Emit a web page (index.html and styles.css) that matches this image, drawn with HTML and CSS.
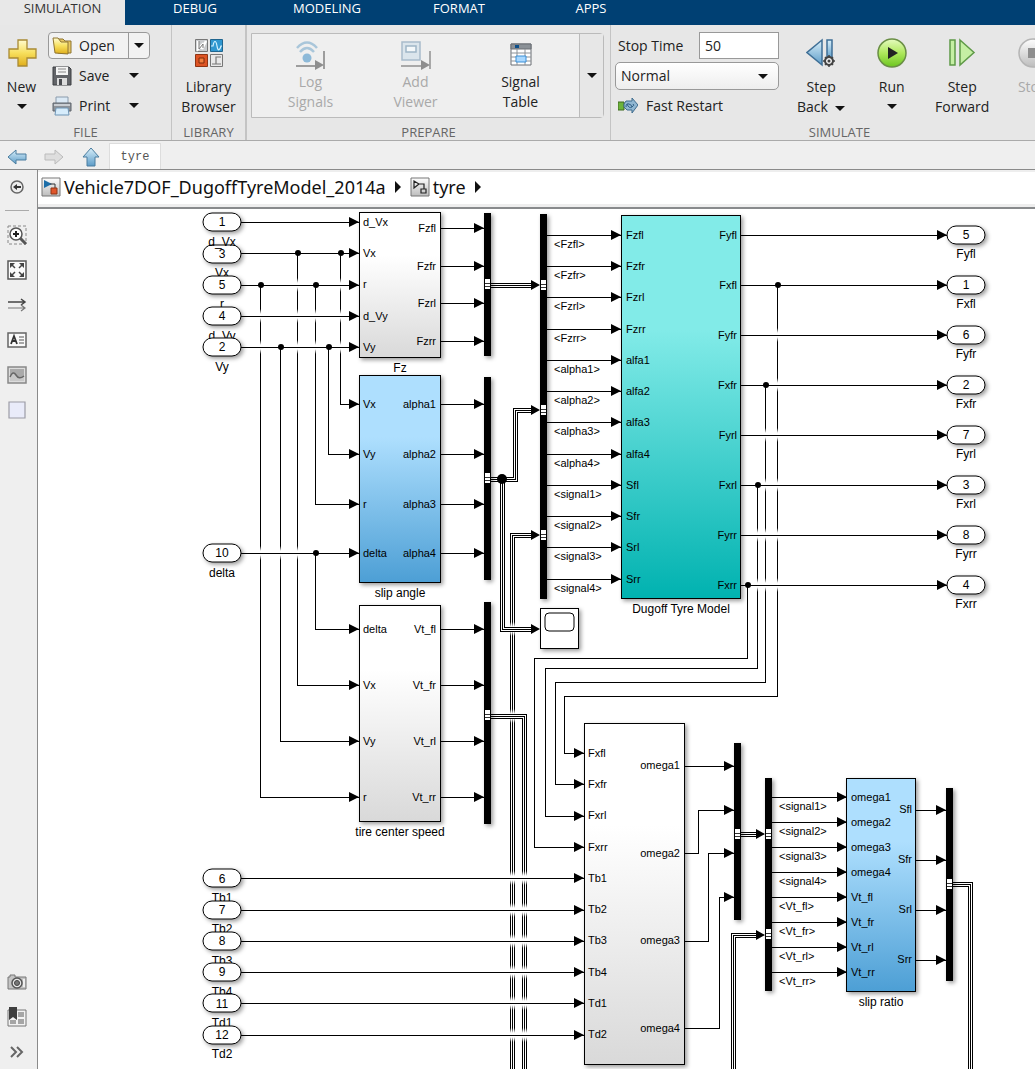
FILE: index.html
```html
<!DOCTYPE html>
<html lang="en">
<head>
	<meta charset="utf-8">
	<title>Vehicle7DOF_DugoffTyreModel_2014a/tyre - Simulink</title>
	<meta name="viewport" content="width=device-width, initial-scale=1.0">
	<link rel="stylesheet" href="styles.css">
</head>
<body>
	<!-- shared gradients -->
	<svg class="defs" width="0" height="0" aria-hidden="true">
		<defs>
			<linearGradient id="gold" x1="0" y1="0" x2="0" y2="1"><stop offset="0" stop-color="#fffbd0"/><stop offset=".5" stop-color="#f7df5c"/><stop offset="1" stop-color="#e0ae1c"/></linearGradient>
			<linearGradient id="steel" x1="0" y1="0" x2="0" y2="1"><stop offset="0" stop-color="#d9effa"/><stop offset="1" stop-color="#5c9cc8"/></linearGradient>
			<linearGradient id="lime" x1="0" y1="0" x2="0" y2="1"><stop offset="0" stop-color="#e6fbc0"/><stop offset=".5" stop-color="#aee85c"/><stop offset="1" stop-color="#6cc520"/></linearGradient>
			<linearGradient id="silver" x1="0" y1="0" x2="0" y2="1"><stop offset="0" stop-color="#fdfdfd"/><stop offset="1" stop-color="#bdbdbd"/></linearGradient>
		</defs>
	</svg>

	<nav class="tabs">
		<a class="tab active" href="#">SIMULATION</a>
		<a class="tab" href="#">DEBUG</a>
		<a class="tab" href="#">MODELING</a>
		<a class="tab" href="#">FORMAT</a>
		<a class="tab" href="#">APPS</a>
	</nav>

	<div class="ribbon">
		<section class="section file">
			<div class="section-body">
				<button class="tool new">
					<svg width="30" height="30" viewBox="0 0 30 30"><path d="M11 2h9v9h9v9h-9v8h-9v-8H2v-9h9z" fill="url(#gold)" stroke="#a98a35" stroke-width="1.3"/></svg>
					<span>New</span>
					<i class="caret"></i>
				</button>
				<div class="file-list">
					<div class="row split">
						<button class="row-main">
							<svg width="20" height="20" viewBox="0 0 20 20"><path d="M6 3h5l2 2h6v12H6z" fill="#e9c964" stroke="#8e7431"/><path d="M1 2h5l3 4h7v12l-13-1z" fill="url(#gold)" stroke="#8e7431"/></svg>
							<span>Open</span>
						</button>
						<button class="row-more" aria-label="Open options"><i class="caret"></i></button>
					</div>
					<div class="row">
						<button class="row-main">
							<svg width="20" height="20" viewBox="0 0 20 20"><path d="M1 1h16l2 2v16H1z" fill="#626468" stroke="#3c3e42"/><path d="M4 1h12v8H4z" fill="#f4f4f4"/><path d="M6 3h8M6 6h8" stroke="#888"/><path d="M5 12h10v7H5z" fill="#ddd"/><path d="M7 13h3v6H7z" fill="#4a4c50"/></svg>
							<span>Save</span>
						</button>
						<button class="row-more" aria-label="Save options"><i class="caret"></i></button>
					</div>
					<div class="row">
						<button class="row-main">
							<svg width="20" height="20" viewBox="0 0 20 20"><path d="M4 1h12v7H4z" fill="#dbe9f5" stroke="#8a9bac"/><path d="M1 7h18v8H1z" fill="#8d9298" stroke="#5f656c"/><path d="M2 8h16v2H2z" fill="#c9cdd2"/><path d="M4 12h12l1 7H3z" fill="#d6ecfb" stroke="#6f95b5"/></svg>
							<span>Print</span>
						</button>
						<button class="row-more" aria-label="Print options"><i class="caret"></i></button>
					</div>
				</div>
			</div>
			<h2>FILE</h2>
		</section>

		<section class="section library">
			<div class="section-body">
				<button class="tool">
					<svg width="30" height="30" viewBox="0 0 30 30">
						<path d="M1.500 1.500h12v12h-12z" fill="#c9cbce" stroke="#777"/><path d="M4 3v8l4-4v4l4-8" fill="none" stroke="#fff" stroke-width="2.500"/><path d="M5 3v8l4-5v4" fill="none" stroke="#777"/>
						<path d="M16.500 1.500h12v12h-12z" fill="#2f97d0" stroke="#20658f"/><path d="M17 8h2c1-6 3-6 4 0s3 4 4 0h1" fill="none" stroke="#d5f2ff" stroke-width="1.200"/>
						<path d="M1.500 16.500h12v12h-12z" fill="#dd5424" stroke="#8f3414"/><path d="M5 20h5v5H5z" fill="#f3803f" stroke="#7e2a0c"/>
						<path d="M16.500 16.500h12v12h-12z" fill="#e9e9e9" stroke="#777"/><path d="M18 26h4v-7h5M22 26h5" fill="none" stroke="#777" stroke-width="1.200"/>
					</svg>
					<span>Library<br>Browser</span>
				</button>
			</div>
			<h2>LIBRARY</h2>
		</section>

		<section class="section prepare">
			<div class="section-body">
				<div class="gallery">
					<div class="gallery-items">
						<button class="tool" disabled>
							<svg width="30" height="30" viewBox="0 0 30 30"><path d="M1 7q10-11 20 0M4 11q7-8 14 0" fill="none" stroke="#a9c6da" stroke-width="2.500"/><circle cx="11" cy="17" r="4.500" fill="#8db9d8"/><path d="M0 25h20M28 10v18" stroke="#9d9d9d" stroke-width="2"/><path d="M19 19l9 5-9 5z" fill="#8e8e8e"/></svg>
							<span>Log<br>Signals</span>
						</button>
						<button class="tool" disabled>
							<svg width="30" height="30" viewBox="0 0 30 30"><path d="M1 1h18v18H1z" fill="#dbe5ec" stroke="#a9bccb" stroke-width="1.500"/><path d="M5 5h10v6H5z" fill="#f4f8fa" stroke="#9fb5c6" stroke-width="1.500"/><path d="M0 25h21M29 10v18" stroke="#a8a8a8" stroke-width="2"/><path d="M20 19l9 5-9 5z" fill="#8e8e8e"/></svg>
							<span>Add<br>Viewer</span>
						</button>
						<button class="tool">
							<svg width="30" height="30" viewBox="0 0 30 30"><path d="M5 3h20v21H5z" fill="#fff" stroke="#6a6f75"/><path d="M5 3h20v5H5z" fill="#8b9197" stroke="#6a6f75"/><path d="M9 4h4v3H9z" fill="#0d4f8a"/><path d="M5 12h20M5 16h20M5 20h20M11 8v16M19 8v16" stroke="#8c9298"/><path d="M10 15h10v6H10z" fill="#a9d8ff" stroke="#3a8fd6"/></svg>
							<span>Signal<br>Table</span>
						</button>
					</div>
					<button class="gallery-more" aria-label="More"><i class="caret"></i></button>
				</div>
			</div>
			<h2>PREPARE</h2>
		</section>

		<section class="section simulate">
			<div class="section-body">
				<div class="settings">
					<div class="stop-time">
						<label for="stop">Stop Time</label>
						<input id="stop" type="text" value="50">
					</div>
					<div class="mode">
						<select aria-label="Simulation mode"><option>Normal</option><option>Accelerator</option></select>
						<i class="caret"></i>
					</div>
					<button class="fast">
						<svg width="20" height="16" viewBox="0 0 20 16"><path d="M0 4h6v8H0z" fill="#6cb33a" stroke="#3e6b21"/><path d="M8 3h6V0l6 7-6 8v-3H9L6 9V6z" fill="#8fb6d2" stroke="#3f6c8e"/><path d="M8 9q0-4 3-3t3 3M9 6q2 5 5 3t1-3" fill="none" stroke="#2f5f85"/></svg>
						<span>Fast Restart</span>
					</button>
				</div>
				<button class="tool">
					<svg width="30" height="30" viewBox="0 0 30 30"><path d="M16 2v25L1 14.500z" fill="url(#steel)" stroke="#3f6f96" stroke-width="1.500"/><path d="M21 2h5v19h-5z" fill="url(#steel)" stroke="#3f6f96" stroke-width="1.500"/><circle cx="23" cy="23" r="4" fill="#eee" stroke="#444" stroke-width="2"/><path d="M23 17v3M23 26v3M17 23h3M26 23h3M19 19l2 2M25 25l2 2M27 19l-2 2M21 25l-2 2" stroke="#444" stroke-width="1.500"/><circle cx="23" cy="23" r="1.500" fill="#444"/></svg>
					<span>Step<br>Back <i class="caret"></i></span>
				</button>
				<button class="tool">
					<svg width="30" height="30" viewBox="0 0 30 30"><circle cx="15" cy="15" r="14" fill="url(#lime)" stroke="#6a8f45" stroke-width="1.500"/><path d="M11 9l10 6-10 6z" fill="#222"/></svg>
					<span>Run</span>
					<i class="caret"></i>
				</button>
				<button class="tool">
					<svg width="30" height="30" viewBox="0 0 30 30"><path d="M3 2h5v25H3zM13 2l14 12.500L13 27z" fill="#c5efa4" stroke="#5f9a48" stroke-width="1.500"/></svg>
					<span>Step<br>Forward</span>
				</button>
				<button class="tool" disabled>
					<svg width="30" height="30" viewBox="0 0 30 30"><circle cx="15" cy="15" r="14" fill="url(#silver)" stroke="#b5b5b5" stroke-width="1.500"/><path d="M10 10h10v10H10z" fill="#8e8e8e"/></svg>
					<span>Stop</span>
				</button>
			</div>
			<h2>SIMULATE</h2>
		</section>
	</div>

	<div class="docbar">
		<button class="nav" aria-label="Back"><svg width="20" height="20" viewBox="0 0 20 20"><path d="M1 10l8-7v4h10v6H9v4z" fill="url(#steel)" stroke="#4a7d9f"/></svg></button>
		<button class="nav" aria-label="Forward" disabled><svg width="20" height="20" viewBox="0 0 20 20"><path d="M19 10l-8-7v4H1v6h10v4z" fill="#dedede" stroke="#bbb"/></svg></button>
		<button class="nav" aria-label="Up"><svg width="20" height="20" viewBox="0 0 20 20"><path d="M10 1l8 9h-4v9H6v-9H2z" fill="url(#steel)" stroke="#4a7d9f"/></svg></button>
		<a class="doc" href="#">tyre</a>
	</div>

	<div class="workspace">
		<aside class="palette">
			<div class="palette-group">
				<button aria-label="Hide browser"><svg width="20" height="20" viewBox="0 0 20 20"><circle cx="10" cy="10" r="6" fill="#eee" stroke="#666" stroke-width="1.500"/><path d="M6 10l4-3v2h4v2h-4v2z" fill="#333"/></svg></button>
				<hr>
				<button aria-label="Zoom"><svg width="20" height="20" viewBox="0 0 20 20"><path d="M1 1h18v18H1z" fill="none" stroke="#888" stroke-dasharray="3 2"/><path d="M13 13l6 6" stroke="#555" stroke-width="3"/><circle cx="9" cy="9" r="6" fill="#fff" stroke="#555" stroke-width="1.500"/><path d="M6 9h6M9 6v6" stroke="#222" stroke-width="2"/></svg></button>
				<button aria-label="Fit to view"><svg width="20" height="20" viewBox="0 0 20 20"><path d="M1 1h18v18H1z" fill="#fbfbfb" stroke="#5a5a5a" stroke-width="1.500"/><path d="M3 3h5L3 8zM17 3h-5l5 5zM3 17h5l-5-5zM17 17h-5l5-5z" fill="#444"/><path d="M4 4l4 4M16 4l-4 4M4 16l4-4M16 16l-4-4" stroke="#444" stroke-width="1.500"/></svg></button>
				<button aria-label="Sample times"><svg width="20" height="20" viewBox="0 0 20 20"><path d="M1 7h17M14 4l4 3-4 3" fill="none" stroke="#444" stroke-width="1.500"/><path d="M1 13h17M14 10l4 3-4 3" fill="none" stroke="#777" stroke-width="1.200"/></svg></button>
				<button aria-label="Annotation"><svg width="20" height="20" viewBox="0 0 20 20"><path d="M1 3h18v14H1z" fill="#fafafa" stroke="#666" stroke-width="1.500"/><path d="M4 14l3-8 3 8M5 11h4" fill="none" stroke="#333" stroke-width="1.800"/><path d="M12 7h5M12 10h5M12 13h5" stroke="#555"/></svg></button>
				<button aria-label="Image"><svg width="20" height="20" viewBox="0 0 20 20"><path d="M1 2h18v16H1z" fill="#dcdcdc" stroke="#888" stroke-width="1.500"/><path d="M3 4h14v12H3z" fill="#aaa"/><path d="M3 12q3-7 6-2t8 1v5H3z" fill="#c8c8c8"/><path d="M3 12q3-7 6-2t8 1" fill="none" stroke="#666" stroke-width="1.500"/></svg></button>
				<button aria-label="Area"><svg width="20" height="20" viewBox="0 0 20 20"><path d="M2 2h16v16H2z" fill="#e9ebf9" stroke="#9c9ca6" stroke-width="1.200"/></svg></button>
			</div>
			<div class="palette-group">
				<button aria-label="Screenshot"><svg width="20" height="20" viewBox="0 0 20 20"><path d="M1 5h2V3h5v2h11v12H1z" fill="#c4c4c4" stroke="#777"/><circle cx="10" cy="11" r="5" fill="#e6e6e6" stroke="#555" stroke-width="1.500"/><circle cx="10" cy="11" r="2.500" fill="#777" stroke="#444"/><path d="M16 7h2v8h-2z" fill="#eee"/></svg></button>
				<button aria-label="Bookmarks"><svg width="20" height="20" viewBox="0 0 20 20"><path d="M1 3h18v16H1z" fill="#f2f2f2" stroke="#777"/><path d="M11 5h6v5h-6zM11 12h6v5h-6zM3 13h6v4H3z" fill="#a5a5a5"/><path d="M2 0h8v13l-4-3-4 3z" fill="#3e3e3e"/></svg></button>
				<button aria-label="More tools"><svg width="20" height="20" viewBox="0 0 20 20"><path d="M4 5l5 5-5 5M10 5l5 5-5 5" fill="none" stroke="#666" stroke-width="2"/></svg></button>
			</div>
		</aside>

		<main class="editor">
			<div class="breadcrumb">
				<a href="#"><svg width="20" height="20" viewBox="0 0 20 20"><path d="M1 1h18v18H1z" fill="url(#silver)" stroke="#777"/><path d="M3 3l8 4-8 4z" fill="#1c6ea8"/><path d="M9 7h5v4" fill="none" stroke="#333"/><path d="M10 11h6v6h-6z" fill="#e0552b" stroke="#8f3414"/></svg>Vehicle7DOF_DugoffTyreModel_2014a</a>
				<i class="crumb-arrow"></i>
				<a href="#"><svg width="20" height="20" viewBox="0 0 20 20"><path d="M1 1h18v18H1z" fill="url(#silver)" stroke="#777"/><path d="M4 4l5 3-5 4zM9 7h5v5M11 12h5v4h-5z" fill="none" stroke="#222" stroke-width="1.200"/></svg>tyre</a>
				<i class="crumb-arrow"></i>
			</div>

			<div class="canvas">
			<svg class="diagram" width="997" height="860" viewBox="38 209 997 860">
				<defs>
					<marker id="arrow" markerUnits="userSpaceOnUse" markerWidth="10" markerHeight="12" refX="10" refY="6" orient="auto"><path d="M0 1l10 5-10 5z"/></marker>
					<linearGradient id="fillGray" x1="0" y1="0" x2="0" y2="1"><stop offset=".3" stop-color="#fff"/><stop offset="1" stop-color="#d9d9d9"/></linearGradient>
					<linearGradient id="fillBlue" x1="0" y1="0" x2="0" y2="1"><stop offset=".3" stop-color="#aedffe"/><stop offset="1" stop-color="#4d9fd5"/></linearGradient>
					<linearGradient id="fillTeal" x1="0" y1="0" x2="0" y2="1"><stop offset=".3" stop-color="#82ebe8"/><stop offset="1" stop-color="#00b2b0"/></linearGradient>
					<linearGradient id="fade" x1="0" y1="0" x2="0" y2="1"><stop offset="0" stop-color="#fff" stop-opacity="0"/><stop offset=".35" stop-color="#fff"/><stop offset=".65" stop-color="#fff"/><stop offset="1" stop-color="#fff" stop-opacity="0"/></linearGradient>
					<g id="hop"><rect x="-4" y="-7" width="9" height="14" fill="url(#fade)"/></g>
					<g id="port"><rect class="port" width="38" height="18" rx="9"/></g>
					<g id="tap"><rect width="5" height="10" x="1" y="-5" fill="#fff"/><path d="M1-1h5M1 2h5" stroke="#333" shape-rendering="crispEdges"/></g>
				</defs>

				<!-- lines that run down and get crossed -->
				<g class="wire" marker-end="url(#arrow)">
					<path d="M260 285V797H359"/>
					<path d="M280 347V741H359"/>
					<path d="M297 253V685H359"/>
					<path d="M315 285V504H359"/>
					<path d="M315 553V629H359"/>
					<path d="M328 347V454H359"/>
					<path d="M340 253V404H359"/>
					<path d="M777 285V696H564V753H584"/>
					<path d="M765 385V682H555V784H584"/>
					<path d="M757 485V668H545V816H584"/>
					<path d="M747 585V658H534V847H584"/>
				</g>

				<!-- bus that passes under the two others -->
				<g>
					<path id="b4" class="bus" d="M512 1069V535H531"/>
					<use href="#b4" class="bus-gap"/>
					<path class="bus-gap" d="M512 1069V535H531"/>
					<path class="wire" d="M512 1069V535H531"/>
					<use href="#hop" x="512" y="629"/><use href="#hop" x="512" y="716"/>
				</g>

				<!-- buses -->
				<g class="bus">
					<path d="M491 285H531"/><path d="M491 479H515V410H531"/><path d="M502 479V629H531"/><path d="M491 716H524V1069"/>
					<path d="M741 834H756"/><path d="M733 1069V935H756"/><path d="M953 884H970V1069"/>
				</g>
				<g class="bus-gap">
					<path d="M491 285H531"/><path d="M491 479H515V410H531"/><path d="M502 479V629H531"/><path d="M491 716H524V1069"/>
					<path d="M741 834H756"/><path d="M733 1069V935H756"/><path d="M953 884H970V1069"/>
				</g>
				<g class="wire">
					<path d="M491 285H531"/><path d="M491 479H515V410H531"/><path d="M502 479V629H531"/><path d="M491 716H524V1069"/>
					<path d="M741 834H756"/><path d="M733 1069V935H756"/><path d="M953 884H970V1069"/>
				</g>
				<path d="M531 280l9 5-9 5zM531 405l9 5-9 5zM531 530l9 5-9 5zM531 624l9 5-9 5zM756 829l9 5-9 5zM756 930l9 5-9 5z"/>

				<!-- crossings -->
				<use href="#hop" x="260" y="316"/><use href="#hop" x="260" y="347"/><use href="#hop" x="260" y="553"/>
				<use href="#hop" x="280" y="553"/>
				<use href="#hop" x="297" y="285"/><use href="#hop" x="297" y="316"/><use href="#hop" x="297" y="347"/><use href="#hop" x="297" y="553"/>
				<use href="#hop" x="315" y="316"/><use href="#hop" x="315" y="347"/>
				<use href="#hop" x="340" y="285"/><use href="#hop" x="340" y="316"/><use href="#hop" x="340" y="347"/>
				<use href="#hop" x="777" y="335"/><use href="#hop" x="777" y="385"/><use href="#hop" x="777" y="435"/><use href="#hop" x="777" y="485"/><use href="#hop" x="777" y="535"/><use href="#hop" x="777" y="585"/>
				<use href="#hop" x="765" y="435"/><use href="#hop" x="765" y="485"/><use href="#hop" x="765" y="535"/><use href="#hop" x="765" y="585"/>
				<use href="#hop" x="757" y="535"/><use href="#hop" x="757" y="585"/>
				<use href="#hop" x="512" y="878"/><use href="#hop" x="512" y="910"/><use href="#hop" x="512" y="941"/><use href="#hop" x="512" y="972"/><use href="#hop" x="512" y="1003"/><use href="#hop" x="512" y="1035"/>
				<use href="#hop" x="524" y="878"/><use href="#hop" x="524" y="910"/><use href="#hop" x="524" y="941"/><use href="#hop" x="524" y="972"/><use href="#hop" x="524" y="1003"/><use href="#hop" x="524" y="1035"/>

				<!-- straight lines -->
				<g class="wire" marker-end="url(#arrow)">
					<path d="M241 222H359"/><path d="M241 253H359"/><path d="M241 285H359"/><path d="M241 316H359"/><path d="M241 347H359"/>
					<path d="M241 553H359"/>
					<path d="M440 228H484"/><path d="M440 266H484"/><path d="M440 303H484"/><path d="M440 341H484"/>
					<path d="M440 404H484"/><path d="M440 454H484"/><path d="M440 504H484"/><path d="M440 553H484"/>
					<path d="M440 629H484"/><path d="M440 685H484"/><path d="M440 741H484"/><path d="M440 797H484"/>
					<path d="M547 235H621"/><path d="M547 266H621"/><path d="M547 297H621"/><path d="M547 329H621"/>
					<path d="M547 360H621"/><path d="M547 391H621"/><path d="M547 422H621"/><path d="M547 454H621"/>
					<path d="M547 485H621"/><path d="M547 516H621"/><path d="M547 547H621"/><path d="M547 579H621"/>
					<path d="M740 235H947"/><path d="M740 285H947"/><path d="M740 335H947"/><path d="M740 385H947"/>
					<path d="M740 435H947"/><path d="M740 485H947"/><path d="M740 535H947"/><path d="M740 585H947"/>
					<path d="M241 878H584"/><path d="M241 910H584"/><path d="M241 941H584"/><path d="M241 972H584"/><path d="M241 1003H584"/><path d="M241 1035H584"/>
					<path d="M684 766H734"/><path d="M684 853H698V810H734"/><path d="M684 941H708V853H734"/><path d="M684 1028H719V897H734"/>
					<path d="M772 797H847"/><path d="M772 822H847"/><path d="M772 847H847"/><path d="M772 872H847"/>
					<path d="M772 897H847"/><path d="M772 922H847"/><path d="M772 947H847"/><path d="M772 972H847"/>
					<path d="M915 810H946"/><path d="M915 860H946"/><path d="M915 910H946"/><path d="M915 960H946"/>
				</g>
				<g class="dots">
					<circle cx="261" cy="285" r="3"/><circle cx="298" cy="253" r="3"/><circle cx="316" cy="285" r="3"/><circle cx="281" cy="347" r="3"/><circle cx="329" cy="347" r="3"/><circle cx="341" cy="253" r="3"/><circle cx="316" cy="553" r="3"/>
					<circle cx="778" cy="285" r="3"/><circle cx="766" cy="385" r="3"/><circle cx="758" cy="485" r="3"/><circle cx="748" cy="585" r="3"/>
					<circle cx="502" cy="479" r="5"/>
				</g>

				<!-- bus creators and selectors -->
				<g class="bar">
					<rect x="484" y="213" width="7" height="143"/><rect x="484" y="377" width="7" height="203"/><rect x="484" y="602" width="7" height="222"/>
					<rect x="540" y="214" width="7" height="385"/>
					<rect x="734" y="743" width="7" height="177"/><rect x="765" y="778" width="7" height="213"/><rect x="946" y="788" width="7" height="193"/>
				</g>
				<use href="#tap" x="484" y="284"/><use href="#tap" x="484" y="478"/><use href="#tap" x="484" y="715"/>
				<use href="#tap" x="540" y="285"/><use href="#tap" x="540" y="410"/><use href="#tap" x="540" y="535"/>
				<use href="#tap" x="734" y="834"/><use href="#tap" x="765" y="834"/><use href="#tap" x="765" y="934"/><use href="#tap" x="946" y="884"/>

				<!-- subsystems -->
				<g class="block">
					<rect x="359" y="212" width="81" height="145" fill="url(#fillGray)"/>
					<rect x="359" y="375" width="81" height="207" fill="url(#fillBlue)"/>
					<rect x="359" y="605" width="81" height="216" fill="url(#fillGray)"/>
					<rect x="621" y="215" width="119" height="383" fill="url(#fillTeal)"/>
					<rect x="584" y="723" width="100" height="341" fill="url(#fillGray)"/>
					<rect x="846" y="778" width="69" height="213" fill="url(#fillBlue)"/>
					<rect x="540" y="608" width="38" height="40" fill="#fff"/>
				</g>
				<rect class="screen" x="545" y="613" width="29" height="18" rx="4"/>

				<g class="in">
					<text x="363" y="226">d_Vx</text><text x="363" y="257">Vx</text><text x="363" y="288">r</text><text x="363" y="320">d_Vy</text><text x="363" y="351">Vy</text>
					<text x="363" y="408">Vx</text><text x="363" y="458">Vy</text><text x="363" y="508">r</text><text x="363" y="557">delta</text>
					<text x="363" y="633">delta</text><text x="363" y="689">Vx</text><text x="363" y="745">Vy</text><text x="363" y="801">r</text>
					<text x="626" y="239">Fzfl</text><text x="626" y="270">Fzfr</text><text x="626" y="301">Fzrl</text><text x="626" y="333">Fzrr</text>
					<text x="626" y="364">alfa1</text><text x="626" y="395">alfa2</text><text x="626" y="426">alfa3</text><text x="626" y="458">alfa4</text>
					<text x="626" y="489">Sfl</text><text x="626" y="520">Sfr</text><text x="626" y="551">Srl</text><text x="626" y="583">Srr</text>
					<text x="588" y="757">Fxfl</text><text x="588" y="788">Fxfr</text><text x="588" y="819">Fxrl</text><text x="588" y="851">Fxrr</text>
					<text x="588" y="882">Tb1</text><text x="588" y="913">Tb2</text><text x="588" y="944">Tb3</text><text x="588" y="976">Tb4</text><text x="588" y="1007">Td1</text><text x="588" y="1038">Td2</text>
					<text x="851" y="801">omega1</text><text x="851" y="826">omega2</text><text x="851" y="851">omega3</text><text x="851" y="876">omega4</text>
					<text x="851" y="901">Vt_fl</text><text x="851" y="926">Vt_fr</text><text x="851" y="951">Vt_rl</text><text x="851" y="976">Vt_rr</text>
				</g>
				<g class="out">
					<text x="436" y="232">Fzfl</text><text x="436" y="270">Fzfr</text><text x="436" y="307">Fzrl</text><text x="436" y="345">Fzrr</text>
					<text x="436" y="408">alpha1</text><text x="436" y="458">alpha2</text><text x="436" y="508">alpha3</text><text x="436" y="557">alpha4</text>
					<text x="436" y="633">Vt_fl</text><text x="436" y="689">Vt_fr</text><text x="436" y="745">Vt_rl</text><text x="436" y="801">Vt_rr</text>
					<text x="737" y="239">Fyfl</text><text x="737" y="289">Fxfl</text><text x="737" y="339">Fyfr</text><text x="737" y="389">Fxfr</text>
					<text x="737" y="439">Fyrl</text><text x="737" y="489">Fxrl</text><text x="737" y="539">Fyrr</text><text x="737" y="589">Fxrr</text>
					<text x="680" y="769">omega1</text><text x="680" y="857">omega2</text><text x="680" y="944">omega3</text><text x="680" y="1032">omega4</text>
					<text x="912" y="813">Sfl</text><text x="912" y="863">Sfr</text><text x="912" y="913">Srl</text><text x="912" y="963">Srr</text>
				</g>
				<!-- signal names -->
				<g class="in">
					<text x="554" y="248">&lt;Fzfl&gt;</text><text x="554" y="279">&lt;Fzfr&gt;</text><text x="554" y="310">&lt;Fzrl&gt;</text><text x="554" y="342">&lt;Fzrr&gt;</text>
					<text x="554" y="373">&lt;alpha1&gt;</text><text x="554" y="404">&lt;alpha2&gt;</text><text x="554" y="435">&lt;alpha3&gt;</text><text x="554" y="467">&lt;alpha4&gt;</text>
					<text x="554" y="498">&lt;signal1&gt;</text><text x="554" y="529">&lt;signal2&gt;</text><text x="554" y="560">&lt;signal3&gt;</text><text x="554" y="592">&lt;signal4&gt;</text>
					<text x="779" y="810">&lt;signal1&gt;</text><text x="779" y="835">&lt;signal2&gt;</text><text x="779" y="860">&lt;signal3&gt;</text><text x="779" y="885">&lt;signal4&gt;</text>
					<text x="779" y="910">&lt;Vt_fl&gt;</text><text x="779" y="935">&lt;Vt_fr&gt;</text><text x="779" y="960">&lt;Vt_rl&gt;</text><text x="779" y="985">&lt;Vt_rr&gt;</text>
				</g>

				<!-- block and port names -->
				<g class="name">
					<text x="400" y="372">Fz</text><text x="400" y="597">slip angle</text><text x="400" y="836">tire center speed</text>
					<text x="681" y="613">Dugoff Tyre Model</text><text x="881" y="1006">slip ratio</text>
					<text x="222" y="277">Vx</text><text x="222" y="308">r</text><text x="222" y="340">d_Vy</text><text x="222" y="371">Vy</text>
					<text x="222" y="577">delta</text>
					<text x="222" y="902">Tb1</text><text x="222" y="933">Tb2</text><text x="222" y="965">Tb3</text><text x="222" y="996">Tb4</text><text x="222" y="1027">Td1</text><text x="222" y="1058">Td2</text>
					<text x="966" y="258">Fyfl</text><text x="966" y="308">Fxfl</text><text x="966" y="358">Fyfr</text><text x="966" y="408">Fxfr</text>
					<text x="966" y="458">Fyrl</text><text x="966" y="508">Fxrl</text><text x="966" y="558">Fyrr</text><text x="966" y="608">Fxrr</text>
				</g>
				<g class="ports">
					<use href="#port" x="203" y="213"/><use href="#port" x="203" y="245"/><use href="#port" x="203" y="276"/><use href="#port" x="203" y="307"/><use href="#port" x="203" y="338"/>
					<use href="#port" x="203" y="544"/>
					<use href="#port" x="203" y="869"/><use href="#port" x="203" y="901"/><use href="#port" x="203" y="932"/><use href="#port" x="203" y="963"/><use href="#port" x="203" y="994"/><use href="#port" x="203" y="1026"/>
					<use href="#port" x="947" y="226"/><use href="#port" x="947" y="276"/><use href="#port" x="947" y="326"/><use href="#port" x="947" y="376"/><use href="#port" x="947" y="426"/><use href="#port" x="947" y="476"/><use href="#port" x="947" y="526"/><use href="#port" x="947" y="576"/>
				</g>
				<g class="name">
					<text x="222" y="246">d_Vx</text>
					<text x="222" y="226">1</text><text x="222" y="258">3</text><text x="222" y="289">5</text><text x="222" y="320">4</text><text x="222" y="351">2</text>
					<text x="222" y="557">10</text>
					<text x="222" y="883">6</text><text x="222" y="914">7</text><text x="222" y="945">8</text><text x="222" y="976">9</text><text x="222" y="1008">11</text><text x="222" y="1039">12</text>
					<text x="966" y="239">5</text><text x="966" y="289">1</text><text x="966" y="339">6</text><text x="966" y="389">2</text><text x="966" y="439">7</text><text x="966" y="489">3</text><text x="966" y="539">8</text><text x="966" y="589">4</text>
				</g>
			</svg>
			</div>
		</main>
	</div>
</body>
</html>
```
FILE: styles.css
```css
* {
	box-sizing:border-box;
}
body {
	display:flex;
	flex-direction:column;
	height:100vh;
	margin:0;
	overflow:hidden;
	background:#efefef;
	color:#222;
	font-family:"Open Sans", "Noto Sans", sans-serif;
	font-size:14px;
}
a {
	color:inherit;
	text-decoration:none;
}
button {
	margin:0;
	padding:0;
	border:0;
	background:none;
	color:inherit;
	font:inherit;
	cursor:pointer;
}
button:disabled {
	color:#a9a9a9;
	cursor:default;
}
svg {
	display:block;
	flex:none;
}
.defs {
	position:absolute;
}
.caret {
	display:inline-block;
	border:5px solid transparent;
	border-top-color:#111;
	border-bottom:0;
}

/* tabs */
.tabs {
	display:flex;
	flex:none;
	height:25px;
	background:#004073;
	color:#fff;
	font-size:13px;
	line-height:17px;
}
.tab {
	width:132px;
	text-align:center;
}
.tab.active {
	width:125px;
	margin-right:4px;
	background:#e8e8e8;
	color:#333;
}

/* ribbon */
.ribbon {
	display:flex;
	flex:none;
	height:116px;
	overflow:hidden;
	background:#e7e7e7;
	border-bottom:1px solid #aaa;
	line-height:20px;
}
.section {
	display:flex;
	flex:none;
	flex-direction:column;
	border-right:1px solid #c4c4c4;
}
.section-body {
	display:flex;
	flex:1;
	min-height:0;
	padding-top:7px;
}
.section h2 {
	flex:none;
	margin:0;
	color:#666;
	font-size:13px;
	font-weight:400;
	line-height:16px;
	text-align:center;
}
.tool {
	display:flex;
	flex-direction:column;
	align-items:center;
	padding-top:6px;
}
.tool span {
	margin-top:9px;
	white-space:nowrap;
}
.tool span .caret {
	margin-left:4px;
	vertical-align:middle;
}
.tool > .caret {
	margin-top:7px;
}
.file {
	width:172px;
}
.library {
	width:75px;
	border-right-width:2px;
}
.library .tool {
	width:100%;
}
.new {
	width:43px;
}
.file-list {
	display:flex;
	flex-direction:column;
	gap:3px;
	width:102px;
	margin-left:5px;
}
.row {
	display:flex;
	height:27px;
	border:1px solid transparent;
}
.row-main {
	display:flex;
	flex:1;
	align-items:center;
	gap:7px;
	padding-left:3px;
}
.row-more {
	display:flex;
	justify-content:center;
	align-items:center;
	width:30px;
}
.split {
	border-color:#999;
	border-radius:4px;
	background:#f2f2f2;
}
.split .row-more {
	width:21px;
	border-left:1px solid #999;
}
.prepare {
	width:364px;
}
.prepare .section-body {
	padding:8px 6px 6px 4px;
}
.gallery {
	display:flex;
	flex:1;
	border:1px solid #bbb;
	border-radius:0 4px 4px 0;
	background:#efefef;
}
.gallery-items {
	display:flex;
	flex:1;
	justify-content:center;
}
.gallery .tool {
	width:105px;
	padding-top:7px;
}
.gallery .tool span {
	margin-top:1px;
}
.gallery-more {
	display:flex;
	justify-content:center;
	align-items:center;
	width:24px;
	border-left:1px solid #bbb;
	background:#e7e7e7;
}
.simulate {
	width:458px;
}
.simulate .section-body {
	padding-left:4px;
}
.simulate .tool {
	width:71px;
}
.settings {
	width:165px;
	margin-right:7px;
}
.stop-time {
	display:flex;
	justify-content:space-between;
	align-items:center;
	padding-left:3px;
}
.stop-time input {
	width:80px;
	height:27px;
	padding:0 5px;
	border:1px solid #999;
	color:inherit;
	font:inherit;
}
.mode {
	display:grid;
	align-items:center;
	margin-top:3px;
}
.mode > * {
	grid-area:1 / 1;
}
.mode select {
	height:28px;
	padding:0 5px;
	border:1px solid #999;
	border-radius:5px;
	background:linear-gradient(#fff, #eee);
	color:inherit;
	font:inherit;
	appearance:none;
}
.mode .caret {
	justify-self:end;
	margin-right:11px;
	pointer-events:none;
}
.fast {
	display:flex;
	align-items:center;
	gap:8px;
	padding:6px 3px;
}

/* document bar */
.docbar {
	display:flex;
	flex:none;
	align-items:flex-end;
	height:29px;
	padding-left:7px;
	border-bottom:1px solid #8a8a8a;
}
.nav {
	width:20px;
	height:25px;
	margin-right:17px;
}
.nav:nth-child(3) {
	margin-right:8px;
}
.doc {
	width:52px;
	height:26px;
	border:1px solid #ddd;
	border-bottom:0;
	background:#fff;
	color:#555;
	font:12px/27px "Liberation Mono", monospace;
	text-align:center;
}

/* workspace */
.workspace {
	display:flex;
	flex:1;
	min-height:0;
}
.palette {
	display:flex;
	flex:none;
	flex-direction:column;
	justify-content:space-between;
	width:38px;
	padding:7px 0;
	border-right:1px solid #8a8a8a;
}
.palette-group {
	display:flex;
	flex-direction:column;
	align-items:center;
	gap:15px;
	padding-right:3px;
}
.palette hr {
	width:24px;
	margin:-2px 0 -1px;
	border:0;
	border-top:1px solid #aaa;
}
.editor {
	display:flex;
	flex:1;
	flex-direction:column;
	min-width:0;
}
.breadcrumb {
	display:flex;
	flex:none;
	align-items:center;
	gap:9px;
	height:39px;
	padding:0 3px 5px;
	border-top:2px solid #eee;
	border-bottom:2px solid #888a8c;
	background:#fff;
	color:#111;
	font-family:"Noto Sans", "Open Sans", sans-serif;
	font-size:18px;
	line-height:24px;
	box-shadow:inset 0 -3px #eee;
}
.breadcrumb a {
	display:flex;
	align-items:center;
	gap:3px;
}
.crumb-arrow {
	border:6px solid transparent;
	border-left-color:#111;
	border-right:0;
}
.canvas {
	flex:1;
	min-height:0;
	overflow:hidden;
	background:#fff;
}

/* diagram */
.diagram {
	font-family:"Liberation Sans", Arial, sans-serif;
	font-size:11px;
	fill:#000;
}
.wire {
	fill:none;
	stroke:#000;
	shape-rendering:crispEdges;
}
.bus, .bus-gap {
	fill:none;
	stroke:#000;
	stroke-width:5px;
	shape-rendering:crispEdges;
}
.bus-gap {
	stroke:#fff;
	stroke-width:3px;
}
#hop rect {
	stroke:none;
}
#arrow path {
	fill:#000;
	stroke:none;
	shape-rendering:auto;
}
.bar rect, .block rect, .ports use {
	filter:drop-shadow(2px 2px 2px rgba(0, 0, 0, .4));
}
.block rect {
	stroke:#000;
	shape-rendering:crispEdges;
}
.port, .screen {
	fill:#fff;
	stroke:#000;
}
.out {
	text-anchor:end;
}
.name {
	font-size:12px;
	text-anchor:middle;
}
```
